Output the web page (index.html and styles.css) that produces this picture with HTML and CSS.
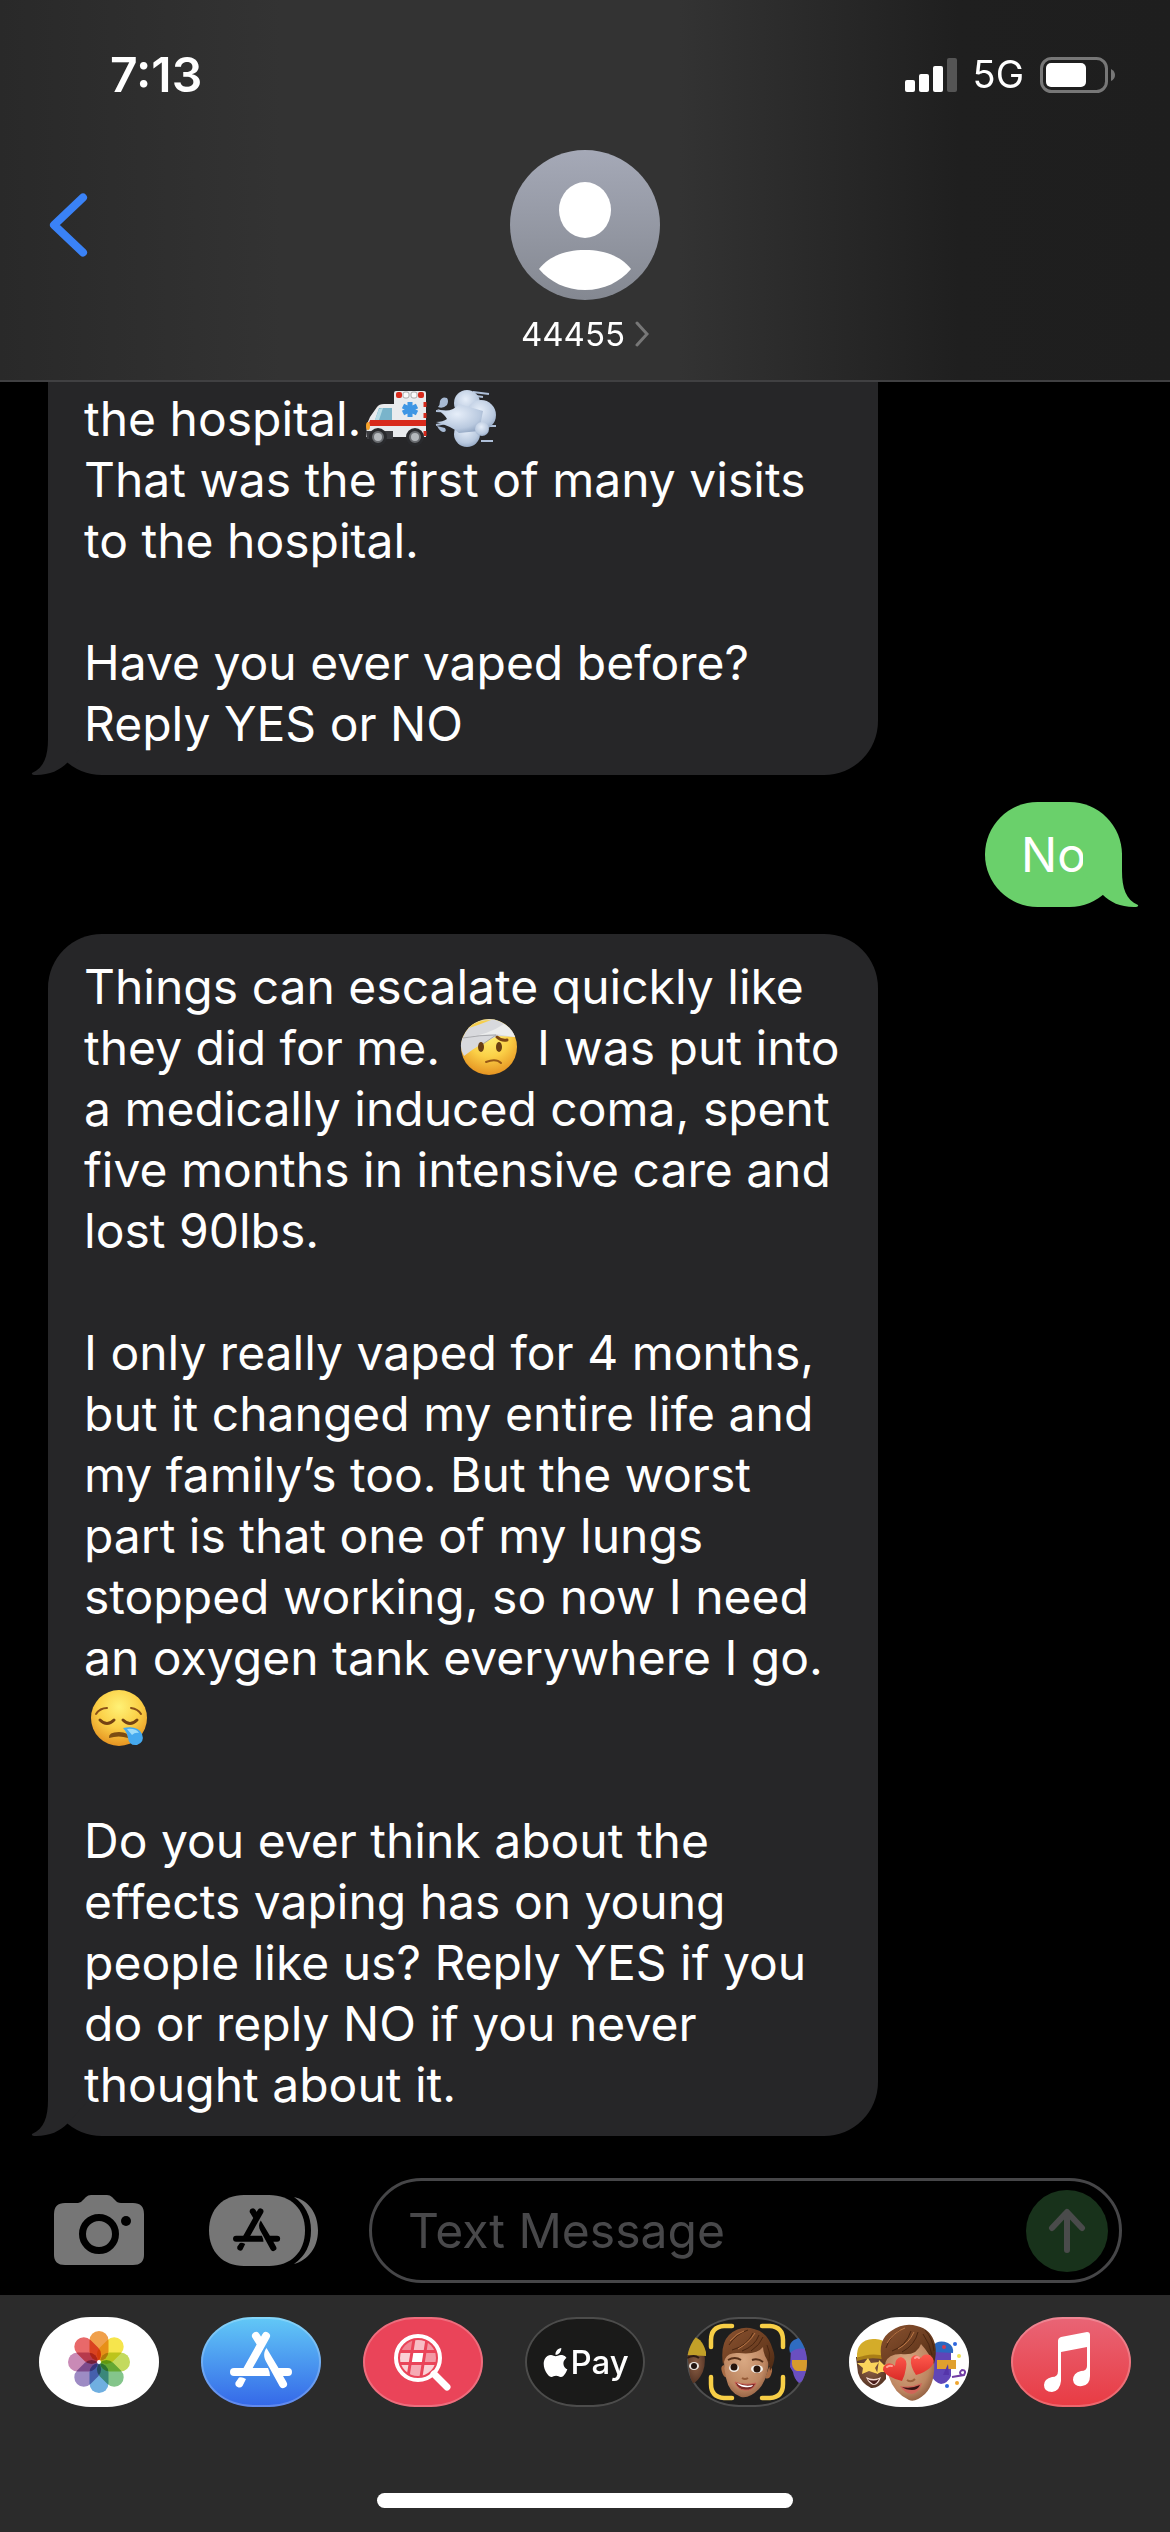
FILE: index.html
```html
<!DOCTYPE html>
<html lang="en">
<head>
<meta charset="utf-8">
<meta name="viewport" content="width=device-width, initial-scale=1">
<title>44455</title>
<link rel="stylesheet" href="styles.css">
</head>
<body>
<svg class="defs" aria-hidden="true">
  <defs>
    <symbol id="appstore" viewBox="0 0 120 90">
      <g fill="currentColor">
        <path d="M33 51H67Q69 55 69 59H33A4 4 0 0 1 33 51Z"/>
        <path d="M65.500 31C62.500 35 62.500 40 65 44.500L78.500 69A4 4 0 0 0 85.500 65L82 59H87A4 4 0 0 0 87 51H77.500Z"/>
        <path d="M38 60.500Q41 59.500 45 62L41.500 69A4 4 0 0 1 34.500 65.500Z"/>
      </g>
      <path d="M65 19L46 53M55 19L60 27" fill="none" stroke="currentColor" stroke-width="8" stroke-linecap="round"/>
    </symbol>
    <symbol id="tail" viewBox="0 0 60 54">
      <path d="M17 0V18C17 35 13 47 1 52Q0 54 5 54C19 54 29 49 36 42L56 20V0Z" fill="currentColor"/>
    </symbol>
    <linearGradient id="hair" x1="0" y1="0" x2="1" y2="1"><stop offset="0" stop-color="#8a5230"/><stop offset=".6" stop-color="#6b3d20"/><stop offset="1" stop-color="#4b2913"/></linearGradient>
    <radialGradient id="skin" cx=".45" cy=".4" r=".65"><stop offset="0" stop-color="#d9a983"/><stop offset=".7" stop-color="#bd8661"/><stop offset="1" stop-color="#8c5b3e"/></radialGradient>
    <radialGradient id="dark" cx=".5" cy=".4" r=".7"><stop offset="0" stop-color="#8d6046"/><stop offset="1" stop-color="#4b2c1e"/></radialGradient>
    <linearGradient id="heart" x1="0" y1="0" x2="0" y2="1"><stop offset="0" stop-color="#ff5a4d"/><stop offset="1" stop-color="#d92a26"/></linearGradient>
    <radialGradient id="face" cx=".5" cy=".3" r=".75"><stop offset="0" stop-color="#fff176"/><stop offset=".5" stop-color="#fbd047"/><stop offset="1" stop-color="#e28a1c"/></radialGradient>
    <radialGradient id="puff" cx=".45" cy=".35" r=".7"><stop offset="0" stop-color="#e6eef9"/><stop offset=".7" stop-color="#b9c9df"/><stop offset="1" stop-color="#8fa3c0"/></radialGradient>
  </defs>
</svg>

<header class="top">
  <div class="status">
    <time class="clock">7:13</time>
    <div class="indicators">
      <svg width="52" height="34" viewBox="0 0 52 34" role="img" aria-label="Signal"><g fill="#fff"><rect y="22" width="10" height="12" rx="2"/><rect x="14" y="16" width="10" height="18" rx="2"/><rect x="28" y="8" width="10" height="26" rx="2"/></g><rect x="42" width="10" height="34" rx="2" fill="#555"/></svg>
      <span class="network">5G</span>
      <svg width="76" height="36" viewBox="0 0 76 36" role="img" aria-label="Battery"><rect x="1.500" y="1.500" width="65" height="33" rx="10" fill="none" stroke="#777" stroke-width="3"/><rect x="6" y="6" width="40" height="24" rx="5" fill="#fff"/><path d="M71 12Q75 14 75 18T71 24Z" fill="#777"/></svg>
    </div>
  </div>
  <div class="nav">
    <button class="back" aria-label="Back"><svg width="40" height="64" viewBox="0 0 40 64"><path d="M35 4.500L6 32L35 59.500" fill="none" stroke="#3a82f7" stroke-width="8" stroke-linecap="round" stroke-linejoin="round"/></svg></button>
    <button class="contact">
      <svg width="150" height="150" viewBox="0 0 150 150" aria-hidden="true"><defs><linearGradient id="av" x1="0" y1="0" x2="0" y2="1"><stop offset="0" stop-color="#a5a9b7"/><stop offset="1" stop-color="#848891"/></linearGradient></defs><circle cx="75" cy="75" r="75" fill="url(#av)"/><ellipse cx="75" cy="60" rx="26" ry="28" fill="#fff"/><path d="M29 119C39 106 56 100 75 100S111 106 121 119C110 132 94 140 75 140S40 132 29 119Z" fill="#fff"/></svg>
      <span class="name">44455<svg width="14" height="26" viewBox="0 0 14 26" aria-hidden="true"><path d="M2 2L12 13L2 24" fill="none" stroke="#777" stroke-width="3" stroke-linecap="round"/></svg></span>
    </button>
  </div>
</header>

<main class="thread">
  <article class="bubble received cut">
    <p>the hospital.<svg class="emoji" viewBox="0 0 62 58" role="img" aria-label="ambulance">
      <path d="M1 49L2 35L5 28L12 18Q14 15 19 15H29V4Q29 2 31 2H59Q61 2 61 4V48H1Z" fill="#e9ebee"/>
      <path d="M14 19H27V31H10Z" fill="#79b4cb"/><path d="M18 19L14 31H10L14 20Z" fill="#b5dbe6"/>
      <path d="M5 31H61V37H3Z" fill="#d82a1c"/><path d="M1 42H28V50H2Z" fill="#3b3c40"/>
      <rect x="31" y="3" width="6" height="6" rx="2" fill="#d82a1c"/><rect x="38" y="3" width="6" height="6" rx="2" fill="#fafafa" stroke="#aaa"/><rect x="46" y="3" width="6" height="6" rx="2" fill="#fafafa" stroke="#aaa"/><rect x="53" y="3" width="6" height="6" rx="2" fill="#d82a1c"/>
      <path d="M45 13V28M38 17L52 24M38 24L52 17" stroke="#3f96e4" stroke-width="5"/>
      <path d="M60 13V18M60 24V29M60 42V47" stroke="#d82a1c" stroke-width="3"/><ellipse cx="3" cy="37" rx="2" ry="4" fill="#f6a22b"/>
      <g fill="#292a2d"><circle cx="13" cy="48" r="9"/><circle cx="50" cy="48" r="9"/></g><g fill="#b4b8bc" stroke="#696c70" stroke-width="2"><circle cx="13" cy="48" r="5"/><circle cx="50" cy="48" r="5"/></g>
    </svg><svg class="emoji" viewBox="0 0 62 58" role="img" aria-label="puff of smoke">
      <path d="M38 3L54 5M34 6L48 8M46 52H58M50 37H61M1 22L18 23M1 36L18 33" stroke="#aebfd8" stroke-width="2"/>
      <g fill="url(#puff)"><circle cx="32" cy="14" r="13"/><circle cx="46" cy="26" r="15"/><circle cx="32" cy="45" r="13"/><path d="M2 20Q16 25 24 15L48 22L44 42L24 44Q16 37 1 33Q8 33 12 30Q10 26 2 20Z"/><circle cx="47" cy="40" r="7"/></g>
      <path d="M3 18Q5 16 5 12Q7 7 12 9Q14 12 12 16Q8 20 3 18ZM2 37Q5 43 9 43Q12 42 10 39Z" fill="#a7bad4"/>
    </svg><br>That was the first of many visits<br>to the hospital.</p>
    <p>Have you ever vaped before?<br>Reply YES or NO</p>
    <svg class="tail" aria-hidden="true"><use href="#tail"/></svg>
  </article>

  <article class="bubble sent">
    <p>No</p>
    <svg class="tail" aria-hidden="true"><use href="#tail"/></svg>
  </article>

  <article class="bubble received">
    <p>Things can escalate quickly like<br>they did for me. <svg class="emoji" viewBox="0 0 62 58" role="img" aria-label="face with head-bandage">
      <circle cx="31" cy="29" r="28" fill="url(#face)"/>
      <path d="M4 21Q10 6 22 3Q36-2 48 7Q55 12 57 19L40 18Q24 24 6 38Q1 31 4 21Z" fill="#d8d9dd"/><path d="M4 21Q13 17 37 16L57 19Q53 10 46 6Q30 17 6 20Z" fill="#eceded"/><path d="M5 20Q22 17 38 17L22 28" fill="none" stroke="#a9aaae" stroke-width="1"/><path d="M14 7Q22 2 33 2L20 7L11 10Z" fill="#f6cf4c"/>
      <ellipse cx="23" cy="29" rx="3" ry="5" fill="#6a3f12"/><ellipse cx="41" cy="29" rx="3" ry="5" fill="#6a3f12"/>
      <path d="M39 19Q43 23 49 22" fill="none" stroke="#7c4513" stroke-width="3" stroke-linecap="round"/><path d="M28 44Q38 40 43 45" fill="none" stroke="#965716" stroke-width="2" stroke-linecap="round"/>
    </svg> I was put into<br>a medically induced coma, spent<br>five months in intensive care and<br>lost 90lbs.</p>
    <p>I only really vaped for 4 months,<br>but it changed my entire life and<br>my family’s too. But the worst<br>part is that one of my lungs<br>stopped working, so now I need<br>an oxygen tank everywhere I go.<br><svg class="emoji" viewBox="0 0 62 58" role="img" aria-label="sleepy face">
      <circle cx="31" cy="29" r="28" fill="url(#face)"/>
      <path d="M8 25Q12 19 19 19M43 19Q50 20 53 25" fill="none" stroke="#8a5017" stroke-width="2" stroke-linecap="round"/>
      <path d="M12 31Q19 38 26 31M35 31Q42 38 49 31" fill="none" stroke="#754313" stroke-width="3" stroke-linecap="round"/><path d="M21 49Q20 43 31 43Q41 43 40 49Q31 46 21 49Z" fill="#7b4c12"/>
      <path d="M35 39Q50 36 54 45Q57 53 49 56Q41 57 40 49Q39 43 35 39Z" fill="#45a9ef"/><path d="M39 40Q48 39 51 44Q47 43 44 46Z" fill="#9ddcf9"/>
    </svg></p>
    <p>Do you ever think about the<br>effects vaping has on young<br>people like us? Reply YES if you<br>do or reply NO if you never<br>thought about it.</p>
    <svg class="tail" aria-hidden="true"><use href="#tail"/></svg>
  </article>
</main>

<form class="composer">
  <button type="button" class="plain" aria-label="Camera"><svg width="90" height="71" viewBox="0 0 90 71"><path d="M11 8H24Q27 8 29 5L32 2Q34 0 37 0H53Q56 0 58 2L61 5Q63 8 67 8H79Q90 8 90 19V60Q90 70 79 70H11Q0 70 0 60V19Q0 8 11 8Z" fill="#767676"/><circle cx="45" cy="39" r="16.500" fill="none" stroke="#000" stroke-width="7"/><circle cx="72" cy="26" r="5" fill="#000"/></svg></button>
  <button type="button" class="plain" aria-label="Apps"><svg width="110" height="71" viewBox="0 0 110 71"><path d="M35 0H60C82 0 96 14 96 35.500S82 71 60 71H35C14 71 0 57 0 35.500S14 0 35 0Z" fill="#767676"/><path d="M85 2C99 5 109 18 109 35.500S99 65 85 69Q102 57 102 35.500T85 2Z" fill="#767676"/><g color="#000" transform="translate(2 2) scale(.76)"><use href="#appstore" width="120" height="90"/></g></svg></button>
  <div class="field">
    <input type="text" placeholder="Text Message" aria-label="Text Message">
    <button type="button" class="send" aria-label="Send"><svg width="40" height="46" viewBox="0 0 40 46"><path d="M20 42V5M5 20L20 4L35 20" fill="none" stroke="#4a4b4b" stroke-width="6" stroke-linecap="round" stroke-linejoin="round"/></svg></button>
  </div>
</form>

<footer class="drawer">
  <nav class="apps" aria-label="App drawer">
    <button class="app photos" aria-label="Photos"><svg viewBox="0 0 120 90"><g transform="translate(60 45)"><g class="petals">
      <rect x="-9.500" y="-31" width="19" height="30" rx="9.500" fill="#f0a04b"/><rect x="-9.500" y="-31" width="19" height="30" rx="9.500" fill="#f6e54c" transform="rotate(45)"/><rect x="-9.500" y="-31" width="19" height="30" rx="9.500" fill="#c3da5e" transform="rotate(90)"/><rect x="-9.500" y="-31" width="19" height="30" rx="9.500" fill="#84c58b" transform="rotate(135)"/><rect x="-9.500" y="-31" width="19" height="30" rx="9.500" fill="#70afe0" transform="rotate(180)"/><rect x="-9.500" y="-31" width="19" height="30" rx="9.500" fill="#9d8bc4" transform="rotate(225)"/><rect x="-9.500" y="-31" width="19" height="30" rx="9.500" fill="#c98ab6" transform="rotate(270)"/><rect x="-9.500" y="-31" width="19" height="30" rx="9.500" fill="#e8696a" transform="rotate(315)"/></g><circle r="2" fill="#fff"/></g></svg></button>
    <button class="app store" aria-label="App Store"><svg viewBox="0 0 120 90"><use href="#appstore"/></svg></button>
    <button class="app images" aria-label="#images"><svg viewBox="0 0 120 90"><defs><clipPath id="lens"><circle cx="55" cy="41" r="18"/></clipPath></defs><g clip-path="url(#lens)"><g fill="#fff" transform="translate(7 0) skewX(-9)"><rect x="35" y="22" width="11" height="11" opacity=".35"/><rect x="49" y="22" width="10" height="11" opacity=".65"/><rect x="62" y="22" width="12" height="11" opacity=".45"/><rect x="35" y="36" width="11" height="9" opacity=".75"/><rect x="49" y="36" width="10" height="9"/><rect x="62" y="36" width="12" height="9" opacity=".45"/><rect x="35" y="48" width="11" height="12" opacity=".75"/><rect x="49" y="48" width="10" height="12" opacity=".55"/><rect x="62" y="48" width="12" height="12" opacity=".75"/></g></g><circle cx="55" cy="41" r="22" fill="none" stroke="#fff" stroke-width="4"/><path d="M71 57L84 70" stroke="#fff" stroke-width="7" stroke-linecap="round"/></svg></button>
    <button class="app pay" aria-label="Apple Pay"><svg class="apple" width="29" height="29" viewBox="0 0 24 24"><path fill="#fff" d="M12.152 6.896c-.948 0-2.415-1.078-3.960-1.040-2.040.027-3.910 1.183-4.961 3.014-2.117 3.675-.546 9.103 1.519 12.090 1.013 1.454 2.208 3.090 3.792 3.039 1.520-.065 2.090-.987 3.935-.987 1.831 0 2.350.987 3.960.948 1.637-.026 2.676-1.480 3.676-2.948 1.156-1.688 1.636-3.325 1.662-3.415-.039-.013-3.182-1.221-3.220-4.857-.026-3.040 2.480-4.494 2.597-4.559-1.429-2.090-3.623-2.324-4.390-2.376-2-.156-3.675 1.090-4.610 1.090zM15.530 3.830c.843-1.012 1.400-2.427 1.245-3.830-1.207.052-2.662.805-3.532 1.818-.780.896-1.454 2.338-1.273 3.714 1.338.104 2.715-.688 3.559-1.701"/></svg><span>Pay</span></button>
    <button class="app memoji" aria-label="Memoji"><svg viewBox="0 0 120 90">
      <path d="M0 34H17Q20 50 13 60Q8 67 4 67Z" fill="url(#dark)"/><path d="M0 38V20Q14 17 19 35V39Z" fill="#c2a028"/><ellipse cx="7" cy="49" rx="5" ry="4" fill="#e9e5e1"/><circle cx="7" cy="49" r="3" fill="#221511"/><path d="M0 41Q7 37 12 41" fill="none" stroke="#2d1c14" stroke-width="2"/>
      <path d="M104 30H120V62L112 66Q107 62 106 55L103 50Z" fill="#6a4fc0"/><path d="M103 36Q100 24 112 21L120 26V33Q111 29 103 36Z" fill="#2f6cc0"/><path d="M105 43H120V54H110Q104 52 105 43Z" fill="#d79b2c"/>
      <path d="M37 48Q33 49 35 55Q37 62 41 60ZM82 50Q87 50 84 58Q82 63 78 61Z" fill="#a86b44"/>
      <path d="M37 31Q40 18 59 18Q80 21 82 42Q81 62 72 72Q62 82 54 80Q42 76 39 61Q36 48 37 31Z" fill="url(#skin)"/>
      <path d="M36 48Q33 27 42 18Q53 8 67 12Q81 15 86 33Q90 42 83 54Q82 45 78 39Q76 34 76 30Q70 38 52 36Q41 35 38 42Z" fill="url(#hair)"/>
      <path d="M42 28Q49 17 61 13M45 33Q60 29 66 16M55 34Q68 29 72 18M64 34Q73 28 76 20M80 28Q84 36 82 44" fill="none" stroke="#4a2611" stroke-width="1"/><path d="M43 24Q50 16 57 14M51 32Q62 26 68 16" fill="none" stroke="#bc7847" stroke-width="1"/>
      <path d="M41 43Q48 39 54 43M65 43Q71 41 76 45" fill="none" stroke="#573019" stroke-width="2"/>
      <ellipse cx="47" cy="51" rx="5" ry="4" fill="#f6f1eb"/><ellipse cx="70" cy="52" rx="6" ry="4" fill="#f6f1eb"/><circle cx="47" cy="50" r="3.500" fill="#26150d"/><circle cx="70" cy="52" r="3.500" fill="#26150d"/>
      <path d="M55 61Q58 63 61 61" fill="none" stroke="#965c38" stroke-width="2"/><path d="M48 65Q58 69 69 66Q66 74 58 73Q51 73 48 65Z" fill="#7b2b26" stroke="#c76155" stroke-width="1"/><path d="M50 66Q58 70 66 68Q65 71 57 70Q52 69 50 66Z" fill="#fff"/>
      <path d="M45 9H37Q24 10 24 23V30M75 9H83Q96 10 96 23V30M24 60V67Q24 80 37 81H45M96 60V67Q96 80 83 81H75" fill="none" stroke="#f7ce46" stroke-width="4.500" stroke-linecap="round"/>
    </svg></button>
    <button class="app stickers" aria-label="Memoji stickers"><svg viewBox="0 0 120 90">
      <path d="M7 40H37V62Q29 72 22 71Q12 66 9 56Z" fill="url(#dark)"/><path d="M8 41Q7 23 24 22Q34 21 38 28V41Q22 36 8 41Z" fill="#d4ac29"/><path d="M8 41Q21 35 37 39V43Q22 39 8 44Z" fill="#a97e17"/>
      <path d="M19 41L22 46L30 45L26 51L29 57L20 54L13 57L14 51L8 46L15 46ZM30 43L35 48L40 46V55L32 55L28 57Z" fill="#fbd45c"/><path d="M17 60Q25 64 32 60Q29 69 24 68Q19 66 17 60Z" fill="#f5ddd5"/><path d="M18 62Q25 65 30 62Q27 68 24 67Z" fill="#491c19"/>
      <path d="M84 34H102V59Q99 66 92 67Q86 66 82 58Z" fill="#6045b7"/><path d="M84 29Q89 22 99 26Q105 29 104 36L86 35Z" fill="#2b68c0"/><path d="M88 43H107V52H88Z" fill="#e0a02e"/><path d="M99 47L94 58H100Z" fill="#5535aa"/><circle cx="95" cy="30" r="2" fill="#d03b52"/><path d="M103 60L115 58Q118 53 113 53Q109 56 113 58" fill="none" stroke="#713da4" stroke-width="2"/><g fill="#2f67df"><circle cx="106" cy="27" r="2"/><circle cx="98" cy="69" r="2"/></g><circle cx="110" cy="39" r="2" fill="#efe152"/><circle cx="108" cy="66" r="2" fill="#efa52f"/>
      <path d="M36 33Q42 20 59 21Q79 25 85 41Q87 66 76 77Q66 86 60 83Q45 76 40 60Q35 48 36 33Z" fill="url(#skin)"/>
      <path d="M33 44Q28 23 42 14Q55 5 68 9Q82 12 86 27Q88 36 85 47Q80 36 72 27Q68 39 52 37Q39 37 36 46Z" fill="url(#hair)"/><path d="M37 31Q41 19 51 13M43 34Q57 29 62 14M53 35Q66 28 69 15M74 17Q81 27 83 38M76 13Q84 22 85 34" fill="none" stroke="#4a2611" stroke-width="1"/><path d="M38 26Q45 15 56 11M49 32Q60 26 65 15" fill="none" stroke="#bc7847" stroke-width="1"/>
      <path d="M53 64Q45 62 38 58Q31 52 36 48Q41 44 46 49Q46 41 52 40Q59 42 57 51Q56 58 53 64ZM67 58Q61 49 62 42Q65 35 72 41Q74 36 81 38Q88 44 82 50Q77 55 67 58Z" fill="url(#heart)"/>
      <path d="M38 50Q40 48 43 49M66 41Q68 39 70 41" fill="none" stroke="#ff9f92" stroke-width="2" stroke-linecap="round"/><path d="M58 63Q62 66 66 62" fill="none" stroke="#9c623d" stroke-width="2"/><path d="M51 69Q62 71 73 66Q71 75 63 77Q55 76 51 69Z" fill="#d16458"/><path d="M53 70Q62 72 71 68Q69 73 63 73Q57 73 53 70Z" fill="#371513"/>
    </svg></button>
    <button class="app music" aria-label="Music"><svg viewBox="0 0 120 90"><path d="M47 24Q47 21 50 20L76 15Q79 15 79 18V59Q79 68 71 69Q63 70 62 63Q62 56 70 54Q76 54 76 49V30L50 35V64Q49 74 41 75Q33 75 33 68Q33 62 41 60Q47 60 47 54Z" fill="#fff"/></svg></button>
  </nav>
  <div class="home"></div>
</footer>
</body>
</html>
```
FILE: styles.css
```css
* { box-sizing: border-box; }

body {
  margin: 0;
  min-height: 100vh;
  display: flex;
  flex-direction: column;
  background: #000;
  color: #fff;
  font-family: Inter, "Liberation Sans", sans-serif;
  font-size: 48px;
  line-height: 61px;
}

button {
  padding: 0;
  border: 0;
  background: none;
  color: inherit;
  font: inherit;
}

svg { display: block; }

.defs { position: absolute; width: 0; height: 0; }

/* Status bar and contact header */
.top {
  height: 382px;
  padding: 44px 48px 0;
  background: linear-gradient(90deg, #292929, #333 24%, #333 58%, #1f1f1f 82%, #1e1e1e);
  border-bottom: 2px solid #404042;
}

.status {
  display: flex;
  justify-content: space-between;
  align-items: center;
  height: 61px;
  padding: 0 6px 0 62px;
}

.clock { font-weight: 600; }

.indicators { display: flex; align-items: center; gap: 16px; }

.network { font-size: 38px; }

.nav {
  display: grid;
  grid-template-columns: 1fr auto 1fr;
  align-items: start;
  padding-top: 45px;
}

.back { justify-self: start; margin-top: 43px; }

.contact { display: flex; flex-direction: column; align-items: center; }

.name {
  display: flex;
  align-items: center;
  gap: 10px;
  margin-top: 14px;
  font-size: 33px;
  line-height: 40px;
}

/* Conversation */
.thread {
  display: flex;
  flex-direction: column;
  align-items: flex-start;
  gap: 27px;
  padding: 1px 48px 42px;
}

.bubble {
  position: relative;
  padding: 22px 36px;
  border-radius: 54px;
  white-space: nowrap;
}

.bubble p { margin: 0; }

.bubble p + p { margin-top: 61px; }

.received { width: 830px; max-width: 100%; padding-bottom: 21px; background: #262628; }

.cut { margin-top: -1px; padding-top: 6px; border-top-left-radius: 0; border-top-right-radius: 0; }

.sent { align-self: flex-end; background: #6ad06b; }

.tail { position: absolute; bottom: 0; width: 60px; height: 54px; }

.received .tail { left: -17px; color: #262628; }

.sent .tail { right: -17px; color: #6ad06b; transform: scaleX(-1); }

.emoji {
  display: inline-block;
  width: 62px;
  height: 58px;
  margin: 0 4px;
  vertical-align: -11px;
}

/* Message entry */
.composer {
  display: flex;
  align-items: center;
  padding: 0 48px 12px 54px;
}

.plain + .plain { margin-left: 65px; }

.field {
  flex: 1;
  min-width: 0;
  display: flex;
  align-items: center;
  height: 105px;
  margin-left: 50px;
  padding: 0 11px 0 36px;
  border: 3px solid #464648;
  border-radius: 53px;
}

.field input {
  flex: 1;
  min-width: 0;
  width: 100%;
  padding: 0;
  border: 0;
  outline: 0;
  background: none;
  color: #fff;
  font: inherit;
}

.field input::placeholder { color: #48484a; opacity: 1; }

.send {
  flex: none;
  display: grid;
  place-items: center;
  width: 82px;
  height: 82px;
  border-radius: 50%;
  background: #18321b;
}

/* App drawer */
.drawer {
  flex: 1;
  display: flex;
  flex-direction: column;
  justify-content: space-between;
  align-items: center;
  padding: 22px 39px 24px;
  background: #2b2b2b;
}

.apps { display: flex; justify-content: space-between; width: 100%; }

.app {
  display: flex;
  align-items: center;
  justify-content: center;
  width: 120px;
  height: 90px;
  border-radius: 52px / 45px;
  overflow: hidden;
  box-shadow: inset 0 0 0 2px rgba(255, 255, 255, .22);
}

.app svg { flex: none; }

.app > svg:not(.apple) { width: 120px; height: 90px; }

.photos, .stickers { background: #fff; }

.petals { isolation: isolate; }

.petals rect { mix-blend-mode: multiply; }

.store { background: linear-gradient(#62c9f7, #3467e8); }

.images { background: #ea4459; }

.pay { background: #1a1a19; font-size: 33px; font-weight: 500; line-height: 40px; }

.memoji { background: #1e1e1e; }

.music { background: linear-gradient(#e96576, #e83b43); }

.home { width: 416px; max-width: 60%; height: 15px; border-radius: 8px; background: #fff; }
```
